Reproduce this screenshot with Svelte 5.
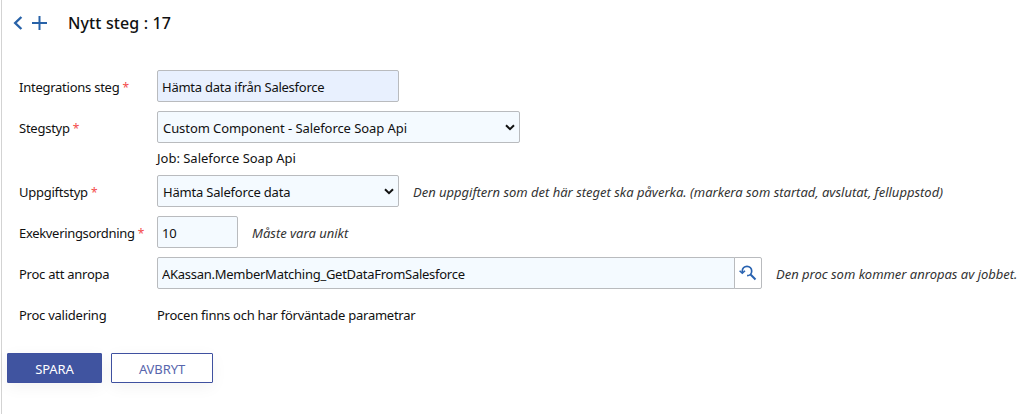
<script>
  let name = $state('Hämta data ifrån Salesforce');
  let order = $state('10');
  let proc = $state('AKassan.MemberMatching_GetDataFromSalesforce');
</script>

{#snippet chevron()}
  <svg class="chevron" width="10" height="7" viewBox="0 0 10 7"><path d="M1 1.2 5 5.2 9 1.2" fill="none" stroke="#111" stroke-width="2" /></svg>
{/snippet}

<main>
  <header>
    <svg width="10" height="14" viewBox="0 0 10 14"><path d="M8.4 1 2.2 7l6.2 6" fill="none" stroke="#2862a8" stroke-width="2.4" /></svg>
    <svg class="plus" width="15" height="14" viewBox="0 0 15 14"><path d="M0 7h15M7.5 0v14" fill="none" stroke="#2862a8" stroke-width="2" /></svg>
    <h1>Nytt steg : 17</h1>
  </header>

  <form onsubmit={(e) => e.preventDefault()}>
    <div class="row">
      <label for="name">Integrations steg <b>*</b></label>
      <input id="name" class="medium filled" bind:value={name} />
    </div>
    <div class="row">
      <label for="type">Stegstyp <b>*</b></label>
      <button type="button" id="type" class="select large"><span>Custom Component - Saleforce Soap Api</span>{@render chevron()}</button>
    </div>
    <div class="job">Job: Saleforce Soap Api</div>
    <div class="row">
      <label for="task">Uppgiftstyp <b>*</b></label>
      <button type="button" id="task" class="select medium"><span>Hämta Saleforce data</span>{@render chevron()}</button>
      <em>Den uppgiftern som det här steget ska påverka. (markera som startad, avslutat, felluppstod)</em>
    </div>
    <div class="row">
      <label for="order" class="tight">Exekveringsordning <b>*</b></label>
      <input id="order" class="small" bind:value={order} />
      <em>Måste vara unikt</em>
    </div>
    <div class="row">
      <label for="proc">Proc att anropa</label>
      <div class="lookup">
        <input id="proc" bind:value={proc} />
        <button type="button" class="search" aria-label="Sök">
          <svg width="18" height="16" viewBox="0 0 18 16" fill="none" stroke="#2862b0">
            <path d="M3.3 7.2V6a4.7 4.7 0 1 1 4.8 4.7" stroke-width="1.7" />
            <path d="M.6 5.7 3.3 8.3 6 5.7" stroke-width="1.5" />
            <path d="m11.3 9.2 5.2 5.3" stroke-width="2" />
          </svg>
        </button>
      </div>
      <em>Den proc som kommer anropas av jobbet.</em>
    </div>
    <div class="row">
      <label for="validation">Proc validering</label>
      <output id="validation">Procen finns och har förväntade parametrar</output>
    </div>
    <footer>
      <button class="save">SPARA</button>
      <button type="button" class="cancel">AVBRYT</button>
    </footer>
  </form>
</main>

<style>
  :global(body) { background: #fff; overflow: hidden; }
  main {
    box-sizing: border-box; height: 414px; margin-left: 1px;
    border-left: 1px solid #d3d3d3; color: #111;
    font: 13px/18px "Noto Sans", "Open Sans", sans-serif;
    letter-spacing: -0.25px; white-space: nowrap;
  }
  input, button { box-sizing: border-box; font: inherit; letter-spacing: inherit; color: inherit; outline: 0; }
  header { display: flex; align-items: center; height: 45px; padding-left: 11px; }
  header svg { display: block; flex: none; }
  .plus { margin-left: 9px; }
  h1 { margin: 0 0 0 21px; font-size: 16px; line-height: 22px; font-weight: 500; letter-spacing: 0.12px; }
  form { padding-top: 25px; }
  .row { display: flex; align-items: center; height: 32px; margin-bottom: 9px; }
  label { flex: none; width: 138px; padding: 2px 0 0 17px; }
  .tight { letter-spacing: -0.32px; }
  b { color: #f44b4b; font-size: 12px; font-weight: 400; }
  input, .select {
    flex: none; height: 32px; padding: 2px 4px 0; border: 1px solid #b9bbbe;
    border-radius: 2px; background: #f4faff;
  }
  .medium { width: 242px; }
  .large { width: 363px; }
  .small { width: 81px; }
  .filled { background: #e8f0fe; }
  .select { display: flex; align-items: center; justify-content: space-between; padding: 2px 5px 0; text-align: left; letter-spacing: -0.2px; }
  .large.select { letter-spacing: -0.07px; }
  .chevron { margin: -2px -1px 0 0; }
  .job { height: 32px; margin-top: -9px; padding-left: 155px; line-height: 31px; letter-spacing: -0.01px; }
  em { margin-left: 14px; padding-top: 2px; color: #333; letter-spacing: -0.01px; }
  .lookup { display: flex; flex: none; width: 605px; }
  .lookup input { width: 578px; border-radius: 2px 0 0 2px; letter-spacing: -0.27px; }
  .search {
    display: flex; align-items: center; justify-content: center; width: 28px; height: 32px;
    margin-left: -1px; padding: 0; border: 1px solid #b9bbbe; border-radius: 0 2px 2px 0; background: #fff;
  }
  #validation { padding: 2px 0 0; }
  footer { display: flex; gap: 9px; margin-top: 22px; padding: 1px 0 0 5px; }
  footer button { height: 30px; padding: 2px 0 0; border: 1px solid #3f51a0; border-radius: 1px; letter-spacing: -0.1px; box-shadow: 0 4px 16px rgb(0 0 0 / 5%); }
  .save { width: 95px; background: #4054a0; color: #fff; }
  .cancel { width: 102px; background: #fff; color: #5866ad; }
</style>
